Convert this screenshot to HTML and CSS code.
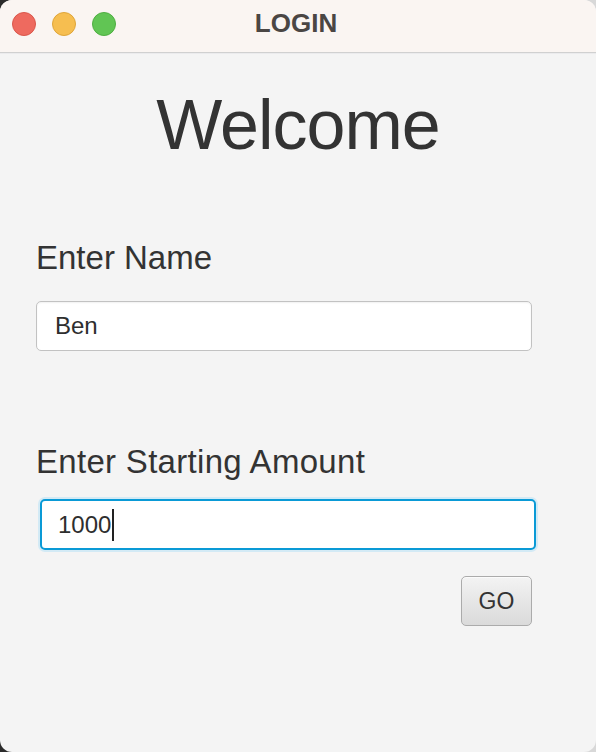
FILE: index.html
```html
<!DOCTYPE html>
<html lang="en">
<head>
<meta charset="utf-8">
<title>LOGIN</title>
<link rel="stylesheet" href="styles.css">
</head>
<body>
<div class="window">
  <header class="titlebar">
    <div class="lights">
      <span class="light red"></span>
      <span class="light yellow"></span>
      <span class="light green"></span>
    </div>
    <div class="title">LOGIN</div>
    <div class="spacer"></div>
  </header>
  <main class="content">
    <h1 class="welcome">Welcome</h1>
    <label class="label label-name">Enter Name</label>
    <div class="field field-name"><span class="value">Ben</span></div>
    <label class="label label-amount">Enter Starting Amount</label>
    <div class="field field-amount focused"><span class="value">1000</span><span class="caret"></span></div>
    <div class="actions">
      <button class="btn">GO</button>
    </div>
  </main>
</div>
</body>
</html>
```

FILE: styles.css
```css
html, body {
  margin: 0;
  padding: 0;
}
body {
  width: 596px;
  height: 752px;
  overflow: hidden;
  background: linear-gradient(90deg, #2b2b2b 50%, #d8d8d8 50%);
  font-family: "Liberation Sans", Arial, sans-serif;
}
.window {
  width: 596px;
  height: 752px;
  border-radius: 12px;
  overflow: hidden;
  background: #f4f4f4;
  display: flex;
  flex-direction: column;
}
.titlebar {
  height: 46px;
  padding-bottom: 6px;
  flex: none;
  background: #faf5f2;
  border-bottom: 1px solid #d0d0d0;
  box-shadow: 0 1px 0 #ebebed;
  display: grid;
  grid-template-columns: 1fr auto 1fr;
  align-items: center;
}
.lights {
  display: flex;
  gap: 16px;
  padding-left: 12px;
  padding-top: 1px;
}
.light {
  width: 24px;
  height: 24px;
  border-radius: 50%;
  box-sizing: border-box;
}
.red { background: #ee6a5f; border: 1px solid #d9574c; }
.yellow { background: #f6be50; border: 1px solid #dea53a; }
.green { background: #61c554; border: 1px solid #4fae42; }
.title {
  font-size: 26px;
  font-weight: bold;
  color: #4a4644;
  line-height: 1;
  margin-left: -4px;
}
.content {
  display: flex;
  flex-direction: column;
  padding: 0 0 0 36px;
}
.welcome {
  margin: 37px 0 0 -36px;
  font-size: 70px;
  font-weight: normal;
  letter-spacing: -1px;
  line-height: 70px;
  color: #333333;
  text-align: center;
}
.label {
  display: block;
  font-size: 33px;
  line-height: 33px;
  color: #333333;
}
.label-name { margin-top: 81px; }
.label-amount { margin-top: 94px; letter-spacing: 0.3px; }
.field {
  box-sizing: border-box;
  width: 496px;
  height: 50px;
  background: #ffffff;
  border-radius: 5px;
  display: flex;
  align-items: center;
  font-size: 24px;
  color: #2e2e2e;
}
.field-name {
  margin-top: 27px;
  border: 1px solid #c2c2c2;
  box-shadow: inset 0 1px 2px rgba(0,0,0,0.06);
  padding-left: 18px;
}
.field-amount {
  margin-top: 21px;
  margin-left: 4px;
  height: 51px;
  border: 2px solid #0a9ad6;
  box-shadow: 0 0 0 2px #d3eaf5;
  padding-left: 16px;
}
.caret {
  display: inline-block;
  width: 2px;
  height: 32px;
  background: #222;
  margin-left: 1px;
}
.actions {
  display: flex;
  justify-content: flex-end;
  width: 496px;
  margin-top: 26px;
}
.btn {
  width: 71px;
  height: 50px;
  box-sizing: border-box;
  border: 1px solid #ababab;
  border-radius: 5px;
  background: linear-gradient(#f3f3f3, #dadada);
  box-shadow: inset 0 1px 0 #fbfbfb;
  font-family: "Liberation Sans", Arial, sans-serif;
  font-size: 23px;
  color: #333;
  padding: 0;
}
```
